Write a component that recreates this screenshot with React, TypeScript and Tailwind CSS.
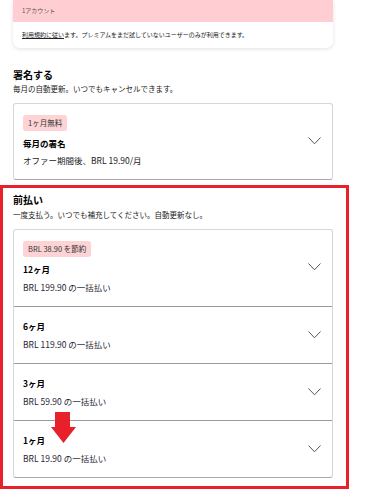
import React from 'react';

const font = { fontFamily: '"Noto Sans CJK JP", "Noto Sans", sans-serif' };

const Chevron = () => (
  <svg width="13" height="8" viewBox="0 0 13 8" className="shrink-0">
    <path d="M0.5 0.5 L6.5 6.8 L12.5 0.5" fill="none" stroke="#555" strokeWidth="1" />
  </svg>
);

const Badge = ({ children }: { children: React.ReactNode }) => (
  <span className="flex h-[16px] w-fit items-center rounded-[3px] bg-[#fdd3d6] px-[5px] text-[7.5px] leading-[10px] text-[#333]">
    {children}
  </span>
);

interface Plan {
  badge?: string;
  title: string;
  price: string;
}

const plans: Plan[] = [
  { badge: 'BRL 38.90 を節約', title: '12ヶ月', price: 'BRL 199.90 の一括払い' },
  { title: '6ヶ月', price: 'BRL 119.90 の一括払い' },
  { title: '3ヶ月', price: 'BRL 59.90 の一括払い' },
  { title: '1ヶ月', price: 'BRL 19.90 の一括払い' },
];

const PlanRow = ({ plan, first }: { plan: Plan; first: boolean }) => (
  <div className={`flex items-center justify-between pl-[9px] pr-[11px] pb-[13px] ${first ? 'pt-[11px]' : 'pt-[13px] border-t border-[#9a9a9a]'}`}>
    <div className="flex flex-col">
      {plan.badge && (
        <div className="mb-[6px]">
          <Badge>{plan.badge}</Badge>
        </div>
      )}
      <div className="text-[8.5px] font-bold leading-[12px] text-black">{plan.title}</div>
      <div className="mt-[6px] text-[8.5px] leading-[12px] text-[#1f2433]">{plan.price}</div>
    </div>
    <Chevron />
  </div>
);

export default function App() {
  return (
    <div className="relative h-[496px] w-[373px] overflow-hidden bg-white" style={font}>
      <div className="px-[13px]">
        <div className="w-[320px] overflow-hidden rounded-b-[7px] bg-white shadow-[0_1px_4px_rgba(0,0,0,0.12)]">
          <div className="flex h-[22px] items-center bg-[#ffcdd2] px-[9px] text-[6px] leading-[8px] text-[#555]">1アカウント</div>
          <div className="flex h-[26px] items-center px-[9px] text-[6px] leading-[8px] text-[#222]">
            <span className="underline">利用規約に従い</span>ます。プレミアムをまだ試していないユーザーのみが利用できます。
          </div>
        </div>

        <div className="mt-[21px] text-[10px] font-bold leading-[12px] text-black">署名する</div>
        <div className="mt-[2px] text-[7.5px] leading-[12px] text-[#222]">毎月の自動更新。いつでもキャンセルできます。</div>

        <div className="mt-[8px] flex w-[320px] items-center justify-between rounded-[3px] border border-[#d6d6d6] border-b-[#aaa] pl-[9px] pr-[11px] pt-[11px] pb-[13px]">
          <div className="flex flex-col">
            <div className="mb-[6px]">
              <Badge>1ヶ月無料</Badge>
            </div>
            <div className="text-[8.5px] font-bold leading-[12px] text-black">毎月の署名</div>
            <div className="mt-[5px] text-[8.5px] leading-[12px] text-[#222]">オファー期間後、BRL 19.90/月</div>
          </div>
          <Chevron />
        </div>
      </div>

      <div className="relative mt-[5px] w-[349px] border-[3px] border-[#e8202a] pl-[10px] pt-[6px] pb-[8px]">
        <div className="text-[10px] font-bold leading-[12px] text-black">前払い</div>
        <div className="mt-[3px] text-[7.5px] leading-[12px] text-[#222]">一度支払う。いつでも補充してください。自動更新なし。</div>
        <div className="mt-[8px] w-[320px] rounded-[3px] border border-[#d6d6d6] border-b-[#aaa]">
          {plans.map((p, i) => (
            <PlanRow key={p.title} plan={p} first={i === 0} />
          ))}
        </div>

        <svg width="25" height="31" viewBox="0 0 25 31" className="absolute left-[48px] top-[224px]">
          <polygon points="4,0 19,0 19,15 25,15 12.5,31 0,15 4,15" fill="#e8202a" />
        </svg>
      </div>
    </div>
  );
}
